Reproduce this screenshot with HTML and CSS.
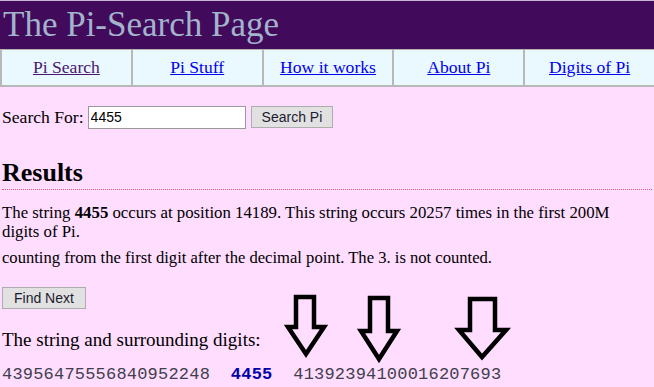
FILE: index.html
```html
<!DOCTYPE html>
<html lang="en">
<head>
  <meta charset="UTF-8">
  <title>The Pi-Search Page</title>
  <link rel="stylesheet" href="styles.css">
</head>
<body>
  <div class="page">
    <div class="header">The Pi-Search Page</div>
    <div class="nav">
      <div class="nav-cell"><a class="visited" href="#">Pi Search</a></div>
      <div class="nav-cell"><a href="#">Pi Stuff</a></div>
      <div class="nav-cell"><a href="#">How it works</a></div>
      <div class="nav-cell"><a href="#">About Pi</a></div>
      <div class="nav-cell"><a href="#">Digits of Pi</a></div>
    </div>

    <div class="content">
      <form class="search" onsubmit="return false">
        <label for="q">Search For:</label>
        <input type="text" id="q" class="search-input" value="4455">
        <button class="btn">Search Pi</button>
      </form>

      <h2 class="results">Results</h2>

      <p class="info">The string <b>4455</b> occurs at position 14189. This string occurs 20257 times in the first 200M digits of Pi.</p>
      <p class="note">counting from the first digit after the decimal point. The 3. is not counted.</p>

      <button class="btn find">Find Next</button>

      <p class="surround">The string and surrounding digits:</p>
      <div class="digits">43956475556840952248&nbsp;&nbsp;<b>4455</b>&nbsp;&nbsp;41392394100016207693</div>
    </div>

    <!-- hand drawn arrows over the digits -->
    <svg class="arrows" width="654" height="387" viewBox="0 0 654 387">
      <polygon points="296,297 314,297 314,327 324,327 306,354 288,327 296,327" />
      <polygon points="370,298 388,298 388,331 397,331 379,359 361,331 370,331" />
      <polygon points="470,299 495,299 495,330 506,330 482,357 459,330 470,330" />
    </svg>
  </div>
</body>
</html>
```

FILE: styles.css
```css
* {
  box-sizing: border-box;
}

body {
  margin: 0;
  background: #ffddff;
  font-family: 'Liberation Serif', 'Times New Roman', serif;
  font-size: 16px;
  color: #000;
}

.page {
  position: relative;
  width: 654px;
  height: 387px;
  overflow: hidden;
}

.header {
  height: 49px;
  border-top: 1px solid #c8b8d8;
  background: #410a5b;
  color: #a2b4cc;
  font-size: 35px;
  line-height: 48px;
  padding-left: 3px;
}

.nav {
  display: flex;
  height: 38px;
  background: #eaf8ff;
  border-top: 1px solid #b0b0b0;
  border-bottom: 2px solid #b8b8b8;
  border-left: 2px solid #b8b8b8;
  font-size: 17.6px;
}

.nav-cell {
  flex: 1;
  display: flex;
  align-items: center;
  justify-content: center;
  border-right: 2px solid #b8b8b8;
}

.nav-cell:last-child {
  border-right: none;
}

.nav-cell a {
  color: #0000ee;
}

.nav-cell a.visited {
  color: #4b1670;
}

.content {
  padding: 0 2px;
}

.search {
  display: flex;
  align-items: center;
  margin-top: 18px;
  height: 24px;
  font-size: 17.6px;
}

.search label {
  margin-right: 4px;
}

.search-input {
  width: 158px;
  height: 23px;
  border: 1px solid #9a9a9a;
  background: #fff;
  font-family: 'Liberation Sans', Arial, sans-serif;
  font-size: 14px;
  padding: 1px 2px;
  margin: 0 5px 0 0;
}

.btn {
  font-family: 'Liberation Sans', Arial, sans-serif;
  font-size: 14px;
  color: #1c1c30;
  background: #e1e1e1;
  border: 1px solid #adadad;
  height: 22px;
  padding: 0 10px;
  margin: 0;
}

.results {
  font-size: 26px;
  margin: 29px 0 0 0;
  padding-bottom: 1px;
  line-height: 30px;
  border-bottom: 1px dotted #ec5a7c;
}

.info {
  margin: 13px 0 0 0;
  font-size: 16.8px;
  line-height: 19.4px;
  padding-right: 4px;
}

.note {
  margin: 6px 0 0 0;
  font-size: 16.6px;
}

.find {
  margin-top: 19px;
  padding: 0 11px;
}

.surround {
  margin: 20px 0 0 0;
  font-size: 19px;
}

.digits {
  margin-top: 14px;
  font-family: 'Liberation Mono', 'Courier New', monospace;
  font-size: 17px;
  letter-spacing: 0.2px;
  color: #40404c;
}

.digits b {
  color: #0000aa;
}

.arrows {
  position: absolute;
  top: 0;
  left: 0;
  pointer-events: none;
}

.arrows polygon {
  fill: none;
  stroke: #000;
  stroke-width: 4.5;
  stroke-linejoin: miter;
}
```
